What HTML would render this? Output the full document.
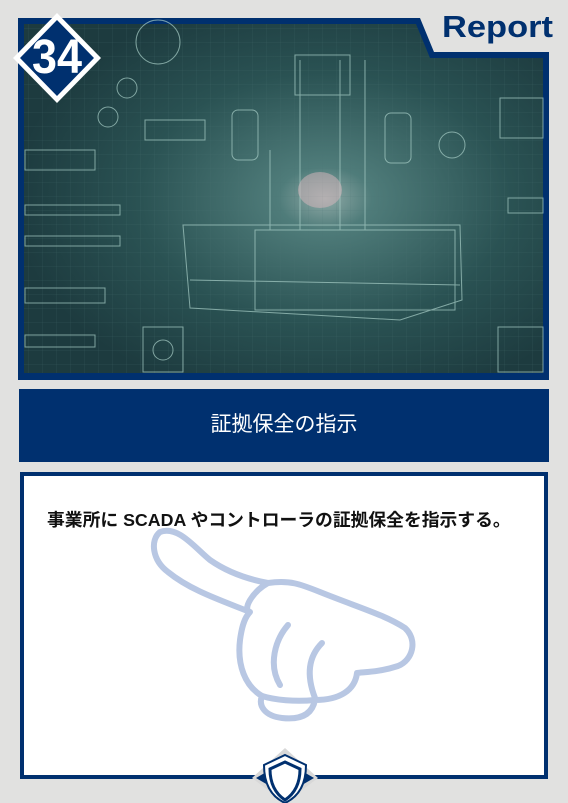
<!DOCTYPE html>
<html><head><meta charset="utf-8"><style>
html,body{margin:0;padding:0;background:#e1e1e0;}
body{width:568px;height:803px;position:relative;overflow:hidden;font-family:"Liberation Sans","Noto Sans CJK JP",sans-serif;}
.t{position:absolute;left:19px;top:389px;width:530px;height:73px;background:#00306f;color:#fff;font-size:21px;text-align:center;line-height:72px;}
.b{position:absolute;left:20px;top:472px;width:520px;height:303px;background:#fff;border:4px solid #00306f;}
.bt{position:absolute;left:23px;top:30px;font-size:17.8px;font-weight:bold;color:#111;white-space:nowrap;}
</style></head><body>
<svg width="568" height="803" style="position:absolute;left:0;top:0">
<defs>
<radialGradient id="g" cx="0.58" cy="0.5" r="0.6">
<stop offset="0" stop-color="#8fa9a6"/><stop offset="0.15" stop-color="#4f7c7a"/><stop offset="0.6" stop-color="#2a5253"/><stop offset="1" stop-color="#1d3b3f"/></radialGradient>
<pattern id="grid" width="14" height="14" patternUnits="userSpaceOnUse"><path d="M14 0H0V14" fill="none" stroke="#4b7472" stroke-width="0.5" opacity="0.5"/></pattern>
</defs>
<polygon points="18,18 420,18 434,52 549,52 549,380 18,380" fill="#00306f"/>
<polygon points="24,24 416,24 430,58 543,58 543,373 24,373" fill="url(#g)"/>
<polygon points="24,24 416,24 430,58 543,58 543,373 24,373" fill="url(#grid)"/>
<g fill="none" stroke="#a9cfc8" stroke-width="1" opacity="0.7">
<rect x="232" y="110" width="26" height="50" rx="6"/><rect x="385" y="113" width="26" height="50" rx="6"/>
<rect x="295" y="55" width="55" height="40"/><rect x="255" y="230" width="200" height="80"/>
<path d="M183 225 L460 225 L462 300 L400 320 L190 308 Z"/>
<path d="M190 280 L460 285"/>
<circle cx="158" cy="42" r="22"/><circle cx="127" cy="88" r="10"/><circle cx="108" cy="117" r="10"/>
<rect x="145" y="120" width="60" height="20"/><rect x="25" y="150" width="70" height="20"/>
<rect x="25" y="205" width="95" height="10"/><rect x="25" y="236" width="95" height="10"/>
<rect x="25" y="288" width="80" height="15"/><rect x="25" y="335" width="70" height="12"/>
<rect x="143" y="327" width="40" height="45"/><circle cx="163" cy="350" r="10"/>
<rect x="500" y="98" width="43" height="40"/><rect x="508" y="198" width="35" height="15"/>
<rect x="498" y="327" width="45" height="45"/><circle cx="452" cy="145" r="13"/>
<path d="M300 60V230M340 60V230M365 60V230M270 150V230"/>
</g>
<ellipse cx="320" cy="190" rx="22" ry="18" fill="#d9b8bd" opacity="0.5"/>
<polygon points="57,13 101,58 57,103 13,58" fill="#fff"/>
<polygon points="57,20 94,58 57,96 20,58" fill="#00306f"/>
<text x="57" y="73" font-family="Liberation Sans,sans-serif" font-weight="bold" font-size="48" fill="#fff" text-anchor="middle" textLength="50" lengthAdjust="spacingAndGlyphs">34</text>
<text x="442" y="37" font-family="Liberation Sans,sans-serif" font-weight="bold" font-size="31" fill="#00306f" textLength="111" lengthAdjust="spacingAndGlyphs">Report</text>
</svg>
<div class="t">証拠保全の指示</div>
<div class="b"><div class="bt">事業所に SCADA やコントローラの証拠保全を指示する。</div></div>
<svg width="568" height="803" style="position:absolute;left:0;top:0">
<path d="M160 532 C178 525 195 548 210 560 C230 574 252 580 268 583 C290 580 300 584 320 592 C360 608 385 615 405 628 C418 640 413 660 398 666 C380 672 365 672 357 673 C355 690 340 700 315 700 C312 715 300 720 282 718 C265 716 258 706 262 696 C245 686 237 665 240 640 C242 625 245 617 250 612 C220 600 190 590 168 572 C152 560 150 540 160 532 Z" fill="#fff" stroke="#b8c7e3" stroke-width="6" stroke-linejoin="round"/>
<path d="M268 583 C252 592 242 610 250 612" fill="none" stroke="#b8c7e3" stroke-width="6"/>
<path d="M288 625 C275 640 268 665 280 685" fill="none" stroke="#b8c7e3" stroke-width="6" stroke-linecap="round"/>
<path d="M322 643 C310 655 305 672 315 698" fill="none" stroke="#b8c7e3" stroke-width="6" stroke-linecap="round"/>
<path d="M262 696 C275 700 295 702 315 700" fill="none" stroke="#b8c7e3" stroke-width="6"/>
<rect x="0" y="777" width="568" height="26" fill="#e1e1e0"/>
<rect x="20" y="775" width="528" height="4" fill="#00306f"/>
<polygon points="285,748 318,778 285,803 252,778" fill="#d8d8d8"/>
<polygon points="256,778 268,771 268,785" fill="#00306f"/><polygon points="314,778 302,771 302,785" fill="#00306f"/>
<path d="M285 755 L306 765 C306 785 298 797 285 803 C272 797 264 785 264 765 Z" fill="#fff" stroke="#00306f" stroke-width="2"/>
<path d="M285 762 L300 769 C300 784 294 794 285 800 C276 794 270 784 270 769 Z" fill="none" stroke="#00306f" stroke-width="3"/>
</svg>
</body></html>
